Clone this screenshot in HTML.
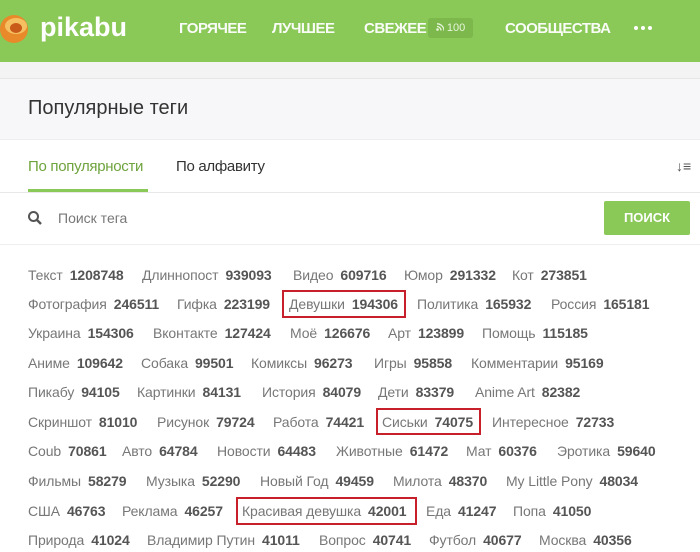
<!DOCTYPE html>
<html><head><meta charset="utf-8"><style>
*{margin:0;padding:0;box-sizing:border-box}
body{width:700px;height:552px;overflow:hidden;background:#fff;font-family:"Liberation Sans",sans-serif;position:relative}
.hdr{position:absolute;left:0;top:0;width:700px;height:62px;background:#8ac858}
.logo{position:absolute;left:40px;top:12px;color:#fff;font-size:27px;font-weight:bold;letter-spacing:0}
.nav{position:absolute;top:20px;color:#fff;font-size:15px;font-weight:bold;opacity:.95;letter-spacing:-.5px}
.badge{position:absolute;left:428px;top:18px;width:45px;height:20px;background:#7cb84c;border-radius:3px;color:#e8f5dc;font-size:11px;line-height:20px;text-align:center}
.strip{position:absolute;left:0;top:62px;width:700px;height:16px;background:#f3f3f3}
.card{position:absolute;left:0;top:78px;width:700px;height:474px;border-top:1px solid #e6e6e6;background:#fff}
.title{position:absolute;left:0;top:79px;width:700px;height:61px;background:#f7f7f9;border-bottom:1px solid #eee}
.title span{position:absolute;left:28px;top:18px;font-size:20px;color:#333}
.tab{position:absolute;top:158px;font-size:15px;letter-spacing:-.3px}
.uline{position:absolute;left:28px;top:189px;width:120px;height:3px;background:#8ac858}
.sep{position:absolute;left:0;top:192px;width:700px;height:1px;background:#e8e8e8}
.sep2{position:absolute;left:0;top:244px;width:700px;height:1px;background:#eee}
.ph{position:absolute;left:58px;top:210px;font-size:14px;color:#777}
.btn{position:absolute;left:604px;top:201px;width:86px;height:34px;background:#8ac858;border-radius:2px;color:#fff;font-size:13px;font-weight:bold;text-align:center;line-height:34px}
.t{position:absolute;font-size:14px;line-height:18px;color:#777;white-space:nowrap;letter-spacing:-.1px}
.t b{color:#555;margin-left:7px}
.box{position:absolute;border:2px solid #c8202a}
</style></head><body>
<div class="hdr">
<svg style="position:absolute;left:0;top:13px" width="34" height="32"><circle cx="14" cy="16" r="14" fill="#e8892a"/><ellipse cx="16" cy="13" rx="11" ry="8" fill="#f5c062"/><ellipse cx="16" cy="15" rx="6" ry="5" fill="#c85a1a"/></svg>
<div class="logo">pikabu</div>
<div class="nav" style="left:179px">ГОРЯЧЕЕ</div>
<div class="nav" style="left:272px">ЛУЧШЕЕ</div>
<div class="nav" style="left:364px">СВЕЖЕЕ</div>
<div class="badge"><svg width="8" height="8" style="vertical-align:-0px"><circle cx="1.5" cy="6.5" r="1.3" fill="#e8f5dc"/><path d="M1 3.5a4 4 0 0 1 4 4M1 0.8a7 7 0 0 1 7 7" stroke="#e8f5dc" stroke-width="1.3" fill="none"/></svg> 100</div>
<div class="nav" style="left:505px">СООБЩЕСТВА</div>
<div style="position:absolute;left:634px;top:26px;display:flex;gap:3px"><i style="width:4px;height:4px;border-radius:2px;background:#fff"></i><i style="width:4px;height:4px;border-radius:2px;background:#fff"></i><i style="width:4px;height:4px;border-radius:2px;background:#fff"></i></div>
</div>
<div class="strip"></div>
<div class="card"></div>
<div class="title"><span>Популярные теги</span></div>
<div class="tab" style="left:28px;color:#6ea33d">По популярности</div>
<div class="tab" style="left:176px;color:#333">По алфавиту</div>
<div style="position:absolute;left:676px;top:158px;font-size:14px;color:#555;font-weight:bold">↓≡</div>
<div class="uline"></div><div class="sep"></div>
<svg style="position:absolute;left:27px;top:210px" width="16" height="16"><circle cx="6.5" cy="6.5" r="4.5" fill="none" stroke="#555" stroke-width="2"/><line x1="10" y1="10" x2="14" y2="14" stroke="#555" stroke-width="2.4"/></svg>
<div class="ph">Поиск тега</div>
<div class="btn">ПОИСК</div>
<div class="sep2"></div>

<div class="t" style="left:28px;top:266px">Текст<b>1208748</b></div>
<div class="t" style="left:142px;top:266px">Длиннопост<b>939093</b></div>
<div class="t" style="left:293px;top:266px">Видео<b>609716</b></div>
<div class="t" style="left:404px;top:266px">Юмор<b>291332</b></div>
<div class="t" style="left:512px;top:266px">Кот<b>273851</b></div>

<div class="t" style="left:28px;top:295px">Фотография<b>246511</b></div>
<div class="t" style="left:177px;top:295px">Гифка<b>223199</b></div>
<div class="t" style="left:289px;top:295px">Девушки<b>194306</b></div>
<div class="box" style="left:282px;top:290px;width:124px;height:28px"></div>
<div class="t" style="left:417px;top:295px">Политика<b>165932</b></div>
<div class="t" style="left:551px;top:295px">Россия<b>165181</b></div>

<div class="t" style="left:28px;top:324px">Украина<b>154306</b></div>
<div class="t" style="left:153px;top:324px">Вконтакте<b>127424</b></div>
<div class="t" style="left:290px;top:324px">Моё<b>126676</b></div>
<div class="t" style="left:388px;top:324px">Арт<b>123899</b></div>
<div class="t" style="left:482px;top:324px">Помощь<b>115185</b></div>

<div class="t" style="left:28px;top:354px">Аниме<b>109642</b></div>
<div class="t" style="left:141px;top:354px">Собака<b>99501</b></div>
<div class="t" style="left:251px;top:354px">Комиксы<b>96273</b></div>
<div class="t" style="left:374px;top:354px">Игры<b>95858</b></div>
<div class="t" style="left:471px;top:354px">Комментарии<b>95169</b></div>

<div class="t" style="left:28px;top:383px">Пикабу<b>94105</b></div>
<div class="t" style="left:137px;top:383px">Картинки<b>84131</b></div>
<div class="t" style="left:262px;top:383px">История<b>84079</b></div>
<div class="t" style="left:378px;top:383px">Дети<b>83379</b></div>
<div class="t" style="left:475px;top:383px">Anime Art<b>82382</b></div>

<div class="t" style="left:28px;top:413px">Скриншот<b>81010</b></div>
<div class="t" style="left:157px;top:413px">Рисунок<b>79724</b></div>
<div class="t" style="left:273px;top:413px">Работа<b>74421</b></div>
<div class="t" style="left:382px;top:413px">Сиськи<b>74075</b></div>
<div class="box" style="left:376px;top:408px;width:105px;height:27px"></div>
<div class="t" style="left:492px;top:413px">Интересное<b>72733</b></div>

<div class="t" style="left:28px;top:442px">Coub<b>70861</b></div>
<div class="t" style="left:122px;top:442px">Авто<b>64784</b></div>
<div class="t" style="left:217px;top:442px">Новости<b>64483</b></div>
<div class="t" style="left:336px;top:442px">Животные<b>61472</b></div>
<div class="t" style="left:466px;top:442px">Мат<b>60376</b></div>
<div class="t" style="left:557px;top:442px">Эротика<b>59640</b></div>

<div class="t" style="left:28px;top:472px">Фильмы<b>58279</b></div>
<div class="t" style="left:146px;top:472px">Музыка<b>52290</b></div>
<div class="t" style="left:260px;top:472px">Новый Год<b>49459</b></div>
<div class="t" style="left:393px;top:472px">Милота<b>48370</b></div>
<div class="t" style="left:506px;top:472px">My Little Pony<b>48034</b></div>

<div class="t" style="left:28px;top:502px">США<b>46763</b></div>
<div class="t" style="left:122px;top:502px">Реклама<b>46257</b></div>
<div class="t" style="left:242px;top:502px">Красивая девушка<b>42001</b></div>
<div class="box" style="left:236px;top:497px;width:181px;height:28px"></div>
<div class="t" style="left:426px;top:502px">Еда<b>41247</b></div>
<div class="t" style="left:513px;top:502px">Попа<b>41050</b></div>

<div class="t" style="left:28px;top:531px">Природа<b>41024</b></div>
<div class="t" style="left:147px;top:531px">Владимир Путин<b>41011</b></div>
<div class="t" style="left:319px;top:531px">Вопрос<b>40741</b></div>
<div class="t" style="left:429px;top:531px">Футбол<b>40677</b></div>
<div class="t" style="left:539px;top:531px">Москва<b>40356</b></div>
</body></html>
